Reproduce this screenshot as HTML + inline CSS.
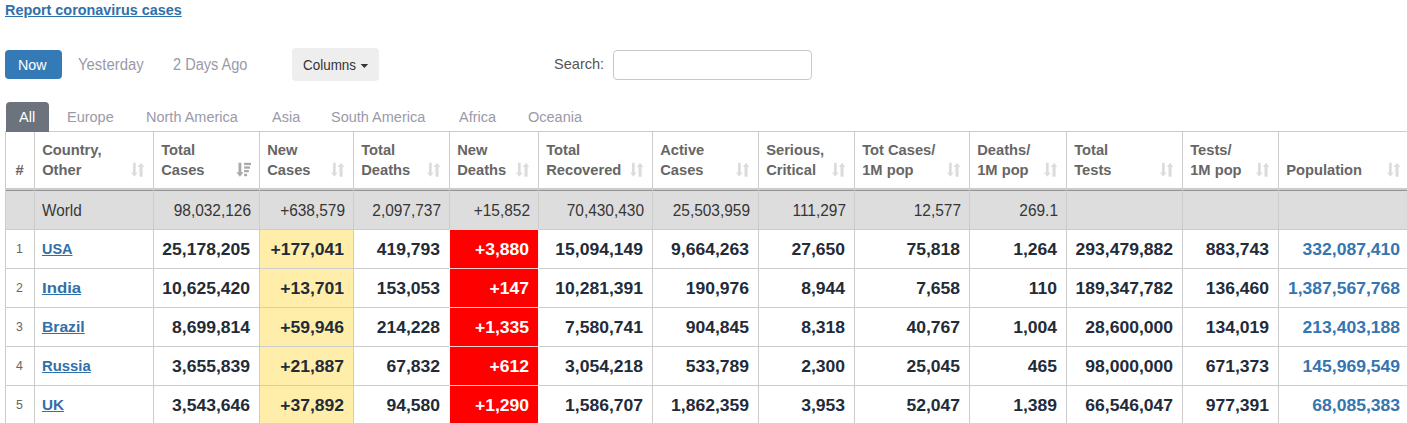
<!DOCTYPE html>
<html><head><meta charset="utf-8"><title>Coronavirus table</title>
<style>
html,body{margin:0;padding:0;background:#fff;}
body{width:1407px;height:423px;overflow:hidden;position:relative;font-family:"Liberation Sans",sans-serif;}
.t{position:absolute;white-space:nowrap;}
.r{position:absolute;}
.lnk{text-decoration:underline;}
</style></head><body>
<div class="t " style="top:0.71px;font-size:14.4px;line-height:19px;left:5.00px;color:#3070aa;font-weight:bold;"><span class="lnk">Report coronavirus cases</span></div>
<div class="r" style="left:5px;top:50px;width:57px;height:29px;background:#337ab7;border-radius:4px;"></div>
<div class="t " style="top:54.90px;font-size:15px;line-height:20px;left:18.40px;color:#fff;transform:scaleX(0.95);transform-origin:0 50%;">Now</div>
<div class="t " style="top:53.86px;font-size:16px;line-height:21px;left:77.90px;color:#9a9aa6;transform:scaleX(0.93);transform-origin:0 50%;">Yesterday</div>
<div class="t " style="top:53.86px;font-size:16px;line-height:21px;left:173.00px;color:#9a9aa6;transform:scaleX(0.91);transform-origin:0 50%;">2 Days Ago</div>
<div class="r" style="left:292px;top:48px;width:87px;height:33px;background:#eeeeee;border-radius:4px;"></div>
<div class="t " style="top:55.85px;font-size:14px;line-height:18px;left:302.80px;color:#333;transform:scaleX(0.96);transform-origin:0 50%;">Columns</div>
<svg class="r" style="left:360px;top:63px" width="9" height="6"><path d="M0.6 1.0 L8.2 1.0 L4.4 5.0 Z" fill="#333"/></svg>
<div class="t " style="top:54.00px;font-size:15px;line-height:20px;left:553.70px;color:#555;transform:scaleX(0.97);transform-origin:0 50%;">Search:</div>
<div class="r" style="left:613px;top:50px;width:197px;height:28px;border:1px solid #c8c8c8;border-radius:4px;background:#fff"></div>
<div class="t " style="top:106.93px;font-size:15.5px;line-height:20px;left:66.80px;color:#9a9aa8;transform:scaleX(0.935);transform-origin:0 50%;">Europe</div>
<div class="t " style="top:106.93px;font-size:15.5px;line-height:20px;left:145.70px;color:#9a9aa8;transform:scaleX(0.935);transform-origin:0 50%;">North America</div>
<div class="t " style="top:106.93px;font-size:15.5px;line-height:20px;left:272.00px;color:#9a9aa8;transform:scaleX(0.935);transform-origin:0 50%;">Asia</div>
<div class="t " style="top:106.93px;font-size:15.5px;line-height:20px;left:331.00px;color:#9a9aa8;transform:scaleX(0.935);transform-origin:0 50%;">South America</div>
<div class="t " style="top:106.93px;font-size:15.5px;line-height:20px;left:459.30px;color:#9a9aa8;transform:scaleX(0.935);transform-origin:0 50%;">Africa</div>
<div class="t " style="top:106.93px;font-size:15.5px;line-height:20px;left:528.20px;color:#9a9aa8;transform:scaleX(0.935);transform-origin:0 50%;">Oceania</div>
<div class="r" style="left:5px;top:191px;width:1407px;height:38px;background:#dddddd;"></div>
<div class="r" style="left:260px;top:230px;width:93px;height:38px;background:#ffeeaa;"></div>
<div class="r" style="left:450px;top:230px;width:88px;height:38px;background:#ff0000;"></div>
<div class="r" style="left:260px;top:269px;width:93px;height:38px;background:#ffeeaa;"></div>
<div class="r" style="left:450px;top:269px;width:88px;height:38px;background:#ff0000;"></div>
<div class="r" style="left:260px;top:308px;width:93px;height:38px;background:#ffeeaa;"></div>
<div class="r" style="left:450px;top:308px;width:88px;height:38px;background:#ff0000;"></div>
<div class="r" style="left:260px;top:347px;width:93px;height:38px;background:#ffeeaa;"></div>
<div class="r" style="left:450px;top:347px;width:88px;height:38px;background:#ff0000;"></div>
<div class="r" style="left:260px;top:386px;width:93px;height:38px;background:#ffeeaa;"></div>
<div class="r" style="left:450px;top:386px;width:88px;height:38px;background:#ff0000;"></div>
<div class="r" style="left:5px;top:131px;width:1402px;height:1px;background:#cccccc;"></div>
<div class="r" style="left:5px;top:188px;width:1402px;height:2px;background:#cccccc;"></div>
<div class="r" style="left:5px;top:190px;width:1402px;height:1px;background:#929292;"></div>
<div class="r" style="left:5px;top:229px;width:1402px;height:1px;background:#cccccc;"></div>
<div class="r" style="left:5px;top:268px;width:1402px;height:1px;background:#cccccc;"></div>
<div class="r" style="left:5px;top:307px;width:1402px;height:1px;background:#cccccc;"></div>
<div class="r" style="left:5px;top:346px;width:1402px;height:1px;background:#cccccc;"></div>
<div class="r" style="left:5px;top:385px;width:1402px;height:1px;background:#cccccc;"></div>
<div class="r" style="left:5px;top:424px;width:1402px;height:1px;background:#cccccc;"></div>
<div class="r" style="left:5px;top:131px;width:1px;height:292px;background:#cccccc;"></div>
<div class="r" style="left:34px;top:131px;width:1px;height:292px;background:#cccccc;"></div>
<div class="r" style="left:153px;top:131px;width:1px;height:292px;background:#cccccc;"></div>
<div class="r" style="left:259px;top:131px;width:1px;height:292px;background:#cccccc;"></div>
<div class="r" style="left:353px;top:131px;width:1px;height:292px;background:#cccccc;"></div>
<div class="r" style="left:449px;top:131px;width:1px;height:292px;background:#cccccc;"></div>
<div class="r" style="left:538px;top:131px;width:1px;height:292px;background:#cccccc;"></div>
<div class="r" style="left:652px;top:131px;width:1px;height:292px;background:#cccccc;"></div>
<div class="r" style="left:758px;top:131px;width:1px;height:292px;background:#cccccc;"></div>
<div class="r" style="left:854px;top:131px;width:1px;height:292px;background:#cccccc;"></div>
<div class="r" style="left:969px;top:131px;width:1px;height:292px;background:#cccccc;"></div>
<div class="r" style="left:1066px;top:131px;width:1px;height:292px;background:#cccccc;"></div>
<div class="r" style="left:1182px;top:131px;width:1px;height:292px;background:#cccccc;"></div>
<div class="r" style="left:1278px;top:131px;width:1px;height:292px;background:#cccccc;"></div>
<div class="r" style="left:449px;top:229px;width:90px;height:1px;background:#ffd2d2;"></div>
<div class="r" style="left:449px;top:268px;width:90px;height:1px;background:#ffd2d2;"></div>
<div class="r" style="left:449px;top:307px;width:90px;height:1px;background:#ffd2d2;"></div>
<div class="r" style="left:449px;top:346px;width:90px;height:1px;background:#ffd2d2;"></div>
<div class="r" style="left:449px;top:385px;width:90px;height:1px;background:#ffd2d2;"></div>
<div class="r" style="left:449px;top:424px;width:90px;height:1px;background:#ffd2d2;"></div>
<div class="r" style="left:449px;top:230px;width:1px;height:193px;background:#fff4f4;"></div>
<div class="r" style="left:538px;top:230px;width:1px;height:193px;background:#fff4f4;"></div>
<div class="r" style="left:6px;top:102px;width:43px;height:30px;background:#6c737c;border-radius:4px 4px 0 0;"></div>
<div class="t " style="top:106.93px;font-size:15.5px;line-height:20px;left:19.30px;color:#fff;transform:scaleX(0.94);transform-origin:0 50%;">All</div>
<div class="t " style="top:161.01px;font-size:14.7px;line-height:19px;left:-280.50px;width:600px;text-align:center;color:#666666;font-weight:bold;">#</div>
<div class="t " style="top:141.11px;font-size:14.7px;line-height:19px;left:42.20px;color:#666666;font-weight:bold;">Country,</div>
<div class="t " style="top:161.01px;font-size:14.7px;line-height:19px;left:42.20px;color:#666666;font-weight:bold;">Other</div>
<svg class="r" style="left:130px;top:162px" width="16" height="16" viewBox="0 0 16 16"><path d="M3.0 0.8 H5.7 V10.6 H7.6 L4.35 14.8 L1.1 10.6 H3.0 Z" fill="#dcdcdc"/><path d="M9.5 14.7 H12.6 V5.0 H14.4 L11.05 0.8 L7.7 5.0 H9.5 Z" fill="#dcdcdc"/></svg>
<div class="t " style="top:141.11px;font-size:14.7px;line-height:19px;left:161.20px;color:#666666;font-weight:bold;">Total</div>
<div class="t " style="top:161.01px;font-size:14.7px;line-height:19px;left:161.20px;color:#666666;font-weight:bold;">Cases</div>
<svg class="r" style="left:236px;top:162px" width="16" height="16" viewBox="0 0 16 16"><path d="M2.5 0.8 H5.3 V10.3 H7.4 L3.9 14.7 L0.4 10.3 H2.5 Z" fill="#a9a9a9"/><rect x="8.1" y="0.8" width="6.9" height="2.3" fill="#a9a9a9"/><rect x="8.1" y="4.4" width="5.9" height="2.3" fill="#a9a9a9"/><rect x="8.1" y="8.0" width="4.7" height="2.3" fill="#a9a9a9"/><rect x="8.1" y="11.8" width="3.0" height="2.4" fill="#a9a9a9"/></svg>
<div class="t " style="top:141.11px;font-size:14.7px;line-height:19px;left:267.20px;color:#666666;font-weight:bold;">New</div>
<div class="t " style="top:161.01px;font-size:14.7px;line-height:19px;left:267.20px;color:#666666;font-weight:bold;">Cases</div>
<svg class="r" style="left:330px;top:162px" width="16" height="16" viewBox="0 0 16 16"><path d="M3.0 0.8 H5.7 V10.6 H7.6 L4.35 14.8 L1.1 10.6 H3.0 Z" fill="#dcdcdc"/><path d="M9.5 14.7 H12.6 V5.0 H14.4 L11.05 0.8 L7.7 5.0 H9.5 Z" fill="#dcdcdc"/></svg>
<div class="t " style="top:141.11px;font-size:14.7px;line-height:19px;left:361.20px;color:#666666;font-weight:bold;">Total</div>
<div class="t " style="top:161.01px;font-size:14.7px;line-height:19px;left:361.20px;color:#666666;font-weight:bold;">Deaths</div>
<svg class="r" style="left:426px;top:162px" width="16" height="16" viewBox="0 0 16 16"><path d="M3.0 0.8 H5.7 V10.6 H7.6 L4.35 14.8 L1.1 10.6 H3.0 Z" fill="#dcdcdc"/><path d="M9.5 14.7 H12.6 V5.0 H14.4 L11.05 0.8 L7.7 5.0 H9.5 Z" fill="#dcdcdc"/></svg>
<div class="t " style="top:141.11px;font-size:14.7px;line-height:19px;left:457.20px;color:#666666;font-weight:bold;">New</div>
<div class="t " style="top:161.01px;font-size:14.7px;line-height:19px;left:457.20px;color:#666666;font-weight:bold;">Deaths</div>
<svg class="r" style="left:515px;top:162px" width="16" height="16" viewBox="0 0 16 16"><path d="M3.0 0.8 H5.7 V10.6 H7.6 L4.35 14.8 L1.1 10.6 H3.0 Z" fill="#dcdcdc"/><path d="M9.5 14.7 H12.6 V5.0 H14.4 L11.05 0.8 L7.7 5.0 H9.5 Z" fill="#dcdcdc"/></svg>
<div class="t " style="top:141.11px;font-size:14.7px;line-height:19px;left:546.20px;color:#666666;font-weight:bold;">Total</div>
<div class="t " style="top:161.01px;font-size:14.7px;line-height:19px;left:546.20px;color:#666666;font-weight:bold;">Recovered</div>
<svg class="r" style="left:629px;top:162px" width="16" height="16" viewBox="0 0 16 16"><path d="M3.0 0.8 H5.7 V10.6 H7.6 L4.35 14.8 L1.1 10.6 H3.0 Z" fill="#dcdcdc"/><path d="M9.5 14.7 H12.6 V5.0 H14.4 L11.05 0.8 L7.7 5.0 H9.5 Z" fill="#dcdcdc"/></svg>
<div class="t " style="top:141.11px;font-size:14.7px;line-height:19px;left:660.20px;color:#666666;font-weight:bold;">Active</div>
<div class="t " style="top:161.01px;font-size:14.7px;line-height:19px;left:660.20px;color:#666666;font-weight:bold;">Cases</div>
<svg class="r" style="left:735px;top:162px" width="16" height="16" viewBox="0 0 16 16"><path d="M3.0 0.8 H5.7 V10.6 H7.6 L4.35 14.8 L1.1 10.6 H3.0 Z" fill="#dcdcdc"/><path d="M9.5 14.7 H12.6 V5.0 H14.4 L11.05 0.8 L7.7 5.0 H9.5 Z" fill="#dcdcdc"/></svg>
<div class="t " style="top:141.11px;font-size:14.7px;line-height:19px;left:766.20px;color:#666666;font-weight:bold;">Serious,</div>
<div class="t " style="top:161.01px;font-size:14.7px;line-height:19px;left:766.20px;color:#666666;font-weight:bold;">Critical</div>
<svg class="r" style="left:831px;top:162px" width="16" height="16" viewBox="0 0 16 16"><path d="M3.0 0.8 H5.7 V10.6 H7.6 L4.35 14.8 L1.1 10.6 H3.0 Z" fill="#dcdcdc"/><path d="M9.5 14.7 H12.6 V5.0 H14.4 L11.05 0.8 L7.7 5.0 H9.5 Z" fill="#dcdcdc"/></svg>
<div class="t " style="top:141.11px;font-size:14.7px;line-height:19px;left:862.20px;color:#666666;font-weight:bold;">Tot Cases/</div>
<div class="t " style="top:161.01px;font-size:14.7px;line-height:19px;left:862.20px;color:#666666;font-weight:bold;">1M pop</div>
<svg class="r" style="left:946px;top:162px" width="16" height="16" viewBox="0 0 16 16"><path d="M3.0 0.8 H5.7 V10.6 H7.6 L4.35 14.8 L1.1 10.6 H3.0 Z" fill="#dcdcdc"/><path d="M9.5 14.7 H12.6 V5.0 H14.4 L11.05 0.8 L7.7 5.0 H9.5 Z" fill="#dcdcdc"/></svg>
<div class="t " style="top:141.11px;font-size:14.7px;line-height:19px;left:977.20px;color:#666666;font-weight:bold;">Deaths/</div>
<div class="t " style="top:161.01px;font-size:14.7px;line-height:19px;left:977.20px;color:#666666;font-weight:bold;">1M pop</div>
<svg class="r" style="left:1043px;top:162px" width="16" height="16" viewBox="0 0 16 16"><path d="M3.0 0.8 H5.7 V10.6 H7.6 L4.35 14.8 L1.1 10.6 H3.0 Z" fill="#dcdcdc"/><path d="M9.5 14.7 H12.6 V5.0 H14.4 L11.05 0.8 L7.7 5.0 H9.5 Z" fill="#dcdcdc"/></svg>
<div class="t " style="top:141.11px;font-size:14.7px;line-height:19px;left:1074.20px;color:#666666;font-weight:bold;">Total</div>
<div class="t " style="top:161.01px;font-size:14.7px;line-height:19px;left:1074.20px;color:#666666;font-weight:bold;">Tests</div>
<svg class="r" style="left:1159px;top:162px" width="16" height="16" viewBox="0 0 16 16"><path d="M3.0 0.8 H5.7 V10.6 H7.6 L4.35 14.8 L1.1 10.6 H3.0 Z" fill="#dcdcdc"/><path d="M9.5 14.7 H12.6 V5.0 H14.4 L11.05 0.8 L7.7 5.0 H9.5 Z" fill="#dcdcdc"/></svg>
<div class="t " style="top:141.11px;font-size:14.7px;line-height:19px;left:1190.20px;color:#666666;font-weight:bold;">Tests/</div>
<div class="t " style="top:161.01px;font-size:14.7px;line-height:19px;left:1190.20px;color:#666666;font-weight:bold;">1M pop</div>
<svg class="r" style="left:1255px;top:162px" width="16" height="16" viewBox="0 0 16 16"><path d="M3.0 0.8 H5.7 V10.6 H7.6 L4.35 14.8 L1.1 10.6 H3.0 Z" fill="#dcdcdc"/><path d="M9.5 14.7 H12.6 V5.0 H14.4 L11.05 0.8 L7.7 5.0 H9.5 Z" fill="#dcdcdc"/></svg>
<div class="t " style="top:161.01px;font-size:14.7px;line-height:19px;left:1286.20px;color:#666666;font-weight:bold;">Population</div>
<svg class="r" style="left:1386px;top:162px" width="16" height="16" viewBox="0 0 16 16"><path d="M3.0 0.8 H5.7 V10.6 H7.6 L4.35 14.8 L1.1 10.6 H3.0 Z" fill="#dcdcdc"/><path d="M9.5 14.7 H12.6 V5.0 H14.4 L11.05 0.8 L7.7 5.0 H9.5 Z" fill="#dcdcdc"/></svg>
<div class="t " style="top:199.86px;font-size:16px;line-height:21px;left:41.80px;color:#363636;transform:scaleX(0.955);transform-origin:0 50%;">World</div>
<div class="t " style="top:199.86px;font-size:16px;line-height:21px;left:-349.50px;width:600px;text-align:right;color:#363636;transform:scaleX(0.965);transform-origin:100% 50%;">98,032,126</div>
<div class="t " style="top:199.86px;font-size:16px;line-height:21px;left:-255.50px;width:600px;text-align:right;color:#363636;transform:scaleX(0.965);transform-origin:100% 50%;">+638,579</div>
<div class="t " style="top:199.86px;font-size:16px;line-height:21px;left:-159.50px;width:600px;text-align:right;color:#363636;transform:scaleX(0.965);transform-origin:100% 50%;">2,097,737</div>
<div class="t " style="top:199.86px;font-size:16px;line-height:21px;left:-70.50px;width:600px;text-align:right;color:#363636;transform:scaleX(0.965);transform-origin:100% 50%;">+15,852</div>
<div class="t " style="top:199.86px;font-size:16px;line-height:21px;left:43.50px;width:600px;text-align:right;color:#363636;transform:scaleX(0.965);transform-origin:100% 50%;">70,430,430</div>
<div class="t " style="top:199.86px;font-size:16px;line-height:21px;left:149.50px;width:600px;text-align:right;color:#363636;transform:scaleX(0.965);transform-origin:100% 50%;">25,503,959</div>
<div class="t " style="top:199.86px;font-size:16px;line-height:21px;left:245.50px;width:600px;text-align:right;color:#363636;transform:scaleX(0.965);transform-origin:100% 50%;">111,297</div>
<div class="t " style="top:199.86px;font-size:16px;line-height:21px;left:360.50px;width:600px;text-align:right;color:#363636;transform:scaleX(0.965);transform-origin:100% 50%;">12,577</div>
<div class="t " style="top:199.86px;font-size:16px;line-height:21px;left:457.50px;width:600px;text-align:right;color:#363636;transform:scaleX(0.965);transform-origin:100% 50%;">269.1</div>
<div class="t " style="top:241.24px;font-size:12.3px;line-height:16px;left:-280.50px;width:600px;text-align:center;color:#666;">1</div>
<div class="t " style="top:238.63px;font-size:15.5px;line-height:20px;left:42.20px;color:#3070aa;font-weight:bold;transform:scaleX(0.931);transform-origin:0 50%;"><span class="lnk">USA</span></div>
<div class="t " style="top:238.96px;font-size:16px;line-height:21px;left:-350.20px;width:600px;text-align:right;color:#232b38;font-weight:bold;transform:scaleX(1.095);transform-origin:100% 50%;">25,178,205</div>
<div class="t " style="top:238.96px;font-size:16px;line-height:21px;left:-256.20px;width:600px;text-align:right;color:#232b38;font-weight:bold;transform:scaleX(1.095);transform-origin:100% 50%;">+177,041</div>
<div class="t " style="top:238.96px;font-size:16px;line-height:21px;left:-160.20px;width:600px;text-align:right;color:#232b38;font-weight:bold;transform:scaleX(1.095);transform-origin:100% 50%;">419,793</div>
<div class="t " style="top:238.96px;font-size:16px;line-height:21px;left:-71.20px;width:600px;text-align:right;color:#ffffff;font-weight:bold;transform:scaleX(1.095);transform-origin:100% 50%;">+3,880</div>
<div class="t " style="top:238.96px;font-size:16px;line-height:21px;left:42.80px;width:600px;text-align:right;color:#232b38;font-weight:bold;transform:scaleX(1.095);transform-origin:100% 50%;">15,094,149</div>
<div class="t " style="top:238.96px;font-size:16px;line-height:21px;left:148.80px;width:600px;text-align:right;color:#232b38;font-weight:bold;transform:scaleX(1.095);transform-origin:100% 50%;">9,664,263</div>
<div class="t " style="top:238.96px;font-size:16px;line-height:21px;left:244.80px;width:600px;text-align:right;color:#232b38;font-weight:bold;transform:scaleX(1.095);transform-origin:100% 50%;">27,650</div>
<div class="t " style="top:238.96px;font-size:16px;line-height:21px;left:359.80px;width:600px;text-align:right;color:#232b38;font-weight:bold;transform:scaleX(1.095);transform-origin:100% 50%;">75,818</div>
<div class="t " style="top:238.96px;font-size:16px;line-height:21px;left:456.80px;width:600px;text-align:right;color:#232b38;font-weight:bold;transform:scaleX(1.095);transform-origin:100% 50%;">1,264</div>
<div class="t " style="top:238.96px;font-size:16px;line-height:21px;left:572.80px;width:600px;text-align:right;color:#232b38;font-weight:bold;transform:scaleX(1.095);transform-origin:100% 50%;">293,479,882</div>
<div class="t " style="top:238.96px;font-size:16px;line-height:21px;left:668.80px;width:600px;text-align:right;color:#232b38;font-weight:bold;transform:scaleX(1.095);transform-origin:100% 50%;">883,743</div>
<div class="t " style="top:238.96px;font-size:16px;line-height:21px;left:799.80px;width:600px;text-align:right;color:#3575b0;font-weight:bold;transform:scaleX(1.095);transform-origin:100% 50%;">332,087,410</div>
<div class="t " style="top:280.24px;font-size:12.3px;line-height:16px;left:-280.50px;width:600px;text-align:center;color:#666;">2</div>
<div class="t " style="top:277.63px;font-size:15.5px;line-height:20px;left:42.20px;color:#3070aa;font-weight:bold;transform:scaleX(1.081);transform-origin:0 50%;"><span class="lnk">India</span></div>
<div class="t " style="top:277.96px;font-size:16px;line-height:21px;left:-350.20px;width:600px;text-align:right;color:#232b38;font-weight:bold;transform:scaleX(1.095);transform-origin:100% 50%;">10,625,420</div>
<div class="t " style="top:277.96px;font-size:16px;line-height:21px;left:-256.20px;width:600px;text-align:right;color:#232b38;font-weight:bold;transform:scaleX(1.095);transform-origin:100% 50%;">+13,701</div>
<div class="t " style="top:277.96px;font-size:16px;line-height:21px;left:-160.20px;width:600px;text-align:right;color:#232b38;font-weight:bold;transform:scaleX(1.095);transform-origin:100% 50%;">153,053</div>
<div class="t " style="top:277.96px;font-size:16px;line-height:21px;left:-71.20px;width:600px;text-align:right;color:#ffffff;font-weight:bold;transform:scaleX(1.095);transform-origin:100% 50%;">+147</div>
<div class="t " style="top:277.96px;font-size:16px;line-height:21px;left:42.80px;width:600px;text-align:right;color:#232b38;font-weight:bold;transform:scaleX(1.095);transform-origin:100% 50%;">10,281,391</div>
<div class="t " style="top:277.96px;font-size:16px;line-height:21px;left:148.80px;width:600px;text-align:right;color:#232b38;font-weight:bold;transform:scaleX(1.095);transform-origin:100% 50%;">190,976</div>
<div class="t " style="top:277.96px;font-size:16px;line-height:21px;left:244.80px;width:600px;text-align:right;color:#232b38;font-weight:bold;transform:scaleX(1.095);transform-origin:100% 50%;">8,944</div>
<div class="t " style="top:277.96px;font-size:16px;line-height:21px;left:359.80px;width:600px;text-align:right;color:#232b38;font-weight:bold;transform:scaleX(1.095);transform-origin:100% 50%;">7,658</div>
<div class="t " style="top:277.96px;font-size:16px;line-height:21px;left:456.80px;width:600px;text-align:right;color:#232b38;font-weight:bold;transform:scaleX(1.095);transform-origin:100% 50%;">110</div>
<div class="t " style="top:277.96px;font-size:16px;line-height:21px;left:572.80px;width:600px;text-align:right;color:#232b38;font-weight:bold;transform:scaleX(1.095);transform-origin:100% 50%;">189,347,782</div>
<div class="t " style="top:277.96px;font-size:16px;line-height:21px;left:668.80px;width:600px;text-align:right;color:#232b38;font-weight:bold;transform:scaleX(1.095);transform-origin:100% 50%;">136,460</div>
<div class="t " style="top:277.96px;font-size:16px;line-height:21px;left:799.80px;width:600px;text-align:right;color:#3575b0;font-weight:bold;transform:scaleX(1.095);transform-origin:100% 50%;">1,387,567,768</div>
<div class="t " style="top:319.24px;font-size:12.3px;line-height:16px;left:-280.50px;width:600px;text-align:center;color:#666;">3</div>
<div class="t " style="top:316.63px;font-size:15.5px;line-height:20px;left:42.20px;color:#3070aa;font-weight:bold;transform:scaleX(1.01);transform-origin:0 50%;"><span class="lnk">Brazil</span></div>
<div class="t " style="top:316.96px;font-size:16px;line-height:21px;left:-350.20px;width:600px;text-align:right;color:#232b38;font-weight:bold;transform:scaleX(1.095);transform-origin:100% 50%;">8,699,814</div>
<div class="t " style="top:316.96px;font-size:16px;line-height:21px;left:-256.20px;width:600px;text-align:right;color:#232b38;font-weight:bold;transform:scaleX(1.095);transform-origin:100% 50%;">+59,946</div>
<div class="t " style="top:316.96px;font-size:16px;line-height:21px;left:-160.20px;width:600px;text-align:right;color:#232b38;font-weight:bold;transform:scaleX(1.095);transform-origin:100% 50%;">214,228</div>
<div class="t " style="top:316.96px;font-size:16px;line-height:21px;left:-71.20px;width:600px;text-align:right;color:#ffffff;font-weight:bold;transform:scaleX(1.095);transform-origin:100% 50%;">+1,335</div>
<div class="t " style="top:316.96px;font-size:16px;line-height:21px;left:42.80px;width:600px;text-align:right;color:#232b38;font-weight:bold;transform:scaleX(1.095);transform-origin:100% 50%;">7,580,741</div>
<div class="t " style="top:316.96px;font-size:16px;line-height:21px;left:148.80px;width:600px;text-align:right;color:#232b38;font-weight:bold;transform:scaleX(1.095);transform-origin:100% 50%;">904,845</div>
<div class="t " style="top:316.96px;font-size:16px;line-height:21px;left:244.80px;width:600px;text-align:right;color:#232b38;font-weight:bold;transform:scaleX(1.095);transform-origin:100% 50%;">8,318</div>
<div class="t " style="top:316.96px;font-size:16px;line-height:21px;left:359.80px;width:600px;text-align:right;color:#232b38;font-weight:bold;transform:scaleX(1.095);transform-origin:100% 50%;">40,767</div>
<div class="t " style="top:316.96px;font-size:16px;line-height:21px;left:456.80px;width:600px;text-align:right;color:#232b38;font-weight:bold;transform:scaleX(1.095);transform-origin:100% 50%;">1,004</div>
<div class="t " style="top:316.96px;font-size:16px;line-height:21px;left:572.80px;width:600px;text-align:right;color:#232b38;font-weight:bold;transform:scaleX(1.095);transform-origin:100% 50%;">28,600,000</div>
<div class="t " style="top:316.96px;font-size:16px;line-height:21px;left:668.80px;width:600px;text-align:right;color:#232b38;font-weight:bold;transform:scaleX(1.095);transform-origin:100% 50%;">134,019</div>
<div class="t " style="top:316.96px;font-size:16px;line-height:21px;left:799.80px;width:600px;text-align:right;color:#3575b0;font-weight:bold;transform:scaleX(1.095);transform-origin:100% 50%;">213,403,188</div>
<div class="t " style="top:358.24px;font-size:12.3px;line-height:16px;left:-280.50px;width:600px;text-align:center;color:#666;">4</div>
<div class="t " style="top:355.63px;font-size:15.5px;line-height:20px;left:42.20px;color:#3070aa;font-weight:bold;transform:scaleX(0.958);transform-origin:0 50%;"><span class="lnk">Russia</span></div>
<div class="t " style="top:355.96px;font-size:16px;line-height:21px;left:-350.20px;width:600px;text-align:right;color:#232b38;font-weight:bold;transform:scaleX(1.095);transform-origin:100% 50%;">3,655,839</div>
<div class="t " style="top:355.96px;font-size:16px;line-height:21px;left:-256.20px;width:600px;text-align:right;color:#232b38;font-weight:bold;transform:scaleX(1.095);transform-origin:100% 50%;">+21,887</div>
<div class="t " style="top:355.96px;font-size:16px;line-height:21px;left:-160.20px;width:600px;text-align:right;color:#232b38;font-weight:bold;transform:scaleX(1.095);transform-origin:100% 50%;">67,832</div>
<div class="t " style="top:355.96px;font-size:16px;line-height:21px;left:-71.20px;width:600px;text-align:right;color:#ffffff;font-weight:bold;transform:scaleX(1.095);transform-origin:100% 50%;">+612</div>
<div class="t " style="top:355.96px;font-size:16px;line-height:21px;left:42.80px;width:600px;text-align:right;color:#232b38;font-weight:bold;transform:scaleX(1.095);transform-origin:100% 50%;">3,054,218</div>
<div class="t " style="top:355.96px;font-size:16px;line-height:21px;left:148.80px;width:600px;text-align:right;color:#232b38;font-weight:bold;transform:scaleX(1.095);transform-origin:100% 50%;">533,789</div>
<div class="t " style="top:355.96px;font-size:16px;line-height:21px;left:244.80px;width:600px;text-align:right;color:#232b38;font-weight:bold;transform:scaleX(1.095);transform-origin:100% 50%;">2,300</div>
<div class="t " style="top:355.96px;font-size:16px;line-height:21px;left:359.80px;width:600px;text-align:right;color:#232b38;font-weight:bold;transform:scaleX(1.095);transform-origin:100% 50%;">25,045</div>
<div class="t " style="top:355.96px;font-size:16px;line-height:21px;left:456.80px;width:600px;text-align:right;color:#232b38;font-weight:bold;transform:scaleX(1.095);transform-origin:100% 50%;">465</div>
<div class="t " style="top:355.96px;font-size:16px;line-height:21px;left:572.80px;width:600px;text-align:right;color:#232b38;font-weight:bold;transform:scaleX(1.095);transform-origin:100% 50%;">98,000,000</div>
<div class="t " style="top:355.96px;font-size:16px;line-height:21px;left:668.80px;width:600px;text-align:right;color:#232b38;font-weight:bold;transform:scaleX(1.095);transform-origin:100% 50%;">671,373</div>
<div class="t " style="top:355.96px;font-size:16px;line-height:21px;left:799.80px;width:600px;text-align:right;color:#3575b0;font-weight:bold;transform:scaleX(1.095);transform-origin:100% 50%;">145,969,549</div>
<div class="t " style="top:397.24px;font-size:12.3px;line-height:16px;left:-280.50px;width:600px;text-align:center;color:#666;">5</div>
<div class="t " style="top:394.63px;font-size:15.5px;line-height:20px;left:42.20px;color:#3070aa;font-weight:bold;transform:scaleX(0.986);transform-origin:0 50%;"><span class="lnk">UK</span></div>
<div class="t " style="top:394.96px;font-size:16px;line-height:21px;left:-350.20px;width:600px;text-align:right;color:#232b38;font-weight:bold;transform:scaleX(1.095);transform-origin:100% 50%;">3,543,646</div>
<div class="t " style="top:394.96px;font-size:16px;line-height:21px;left:-256.20px;width:600px;text-align:right;color:#232b38;font-weight:bold;transform:scaleX(1.095);transform-origin:100% 50%;">+37,892</div>
<div class="t " style="top:394.96px;font-size:16px;line-height:21px;left:-160.20px;width:600px;text-align:right;color:#232b38;font-weight:bold;transform:scaleX(1.095);transform-origin:100% 50%;">94,580</div>
<div class="t " style="top:394.96px;font-size:16px;line-height:21px;left:-71.20px;width:600px;text-align:right;color:#ffffff;font-weight:bold;transform:scaleX(1.095);transform-origin:100% 50%;">+1,290</div>
<div class="t " style="top:394.96px;font-size:16px;line-height:21px;left:42.80px;width:600px;text-align:right;color:#232b38;font-weight:bold;transform:scaleX(1.095);transform-origin:100% 50%;">1,586,707</div>
<div class="t " style="top:394.96px;font-size:16px;line-height:21px;left:148.80px;width:600px;text-align:right;color:#232b38;font-weight:bold;transform:scaleX(1.095);transform-origin:100% 50%;">1,862,359</div>
<div class="t " style="top:394.96px;font-size:16px;line-height:21px;left:244.80px;width:600px;text-align:right;color:#232b38;font-weight:bold;transform:scaleX(1.095);transform-origin:100% 50%;">3,953</div>
<div class="t " style="top:394.96px;font-size:16px;line-height:21px;left:359.80px;width:600px;text-align:right;color:#232b38;font-weight:bold;transform:scaleX(1.095);transform-origin:100% 50%;">52,047</div>
<div class="t " style="top:394.96px;font-size:16px;line-height:21px;left:456.80px;width:600px;text-align:right;color:#232b38;font-weight:bold;transform:scaleX(1.095);transform-origin:100% 50%;">1,389</div>
<div class="t " style="top:394.96px;font-size:16px;line-height:21px;left:572.80px;width:600px;text-align:right;color:#232b38;font-weight:bold;transform:scaleX(1.095);transform-origin:100% 50%;">66,546,047</div>
<div class="t " style="top:394.96px;font-size:16px;line-height:21px;left:668.80px;width:600px;text-align:right;color:#232b38;font-weight:bold;transform:scaleX(1.095);transform-origin:100% 50%;">977,391</div>
<div class="t " style="top:394.96px;font-size:16px;line-height:21px;left:799.80px;width:600px;text-align:right;color:#3575b0;font-weight:bold;transform:scaleX(1.095);transform-origin:100% 50%;">68,085,383</div>
</body></html>
